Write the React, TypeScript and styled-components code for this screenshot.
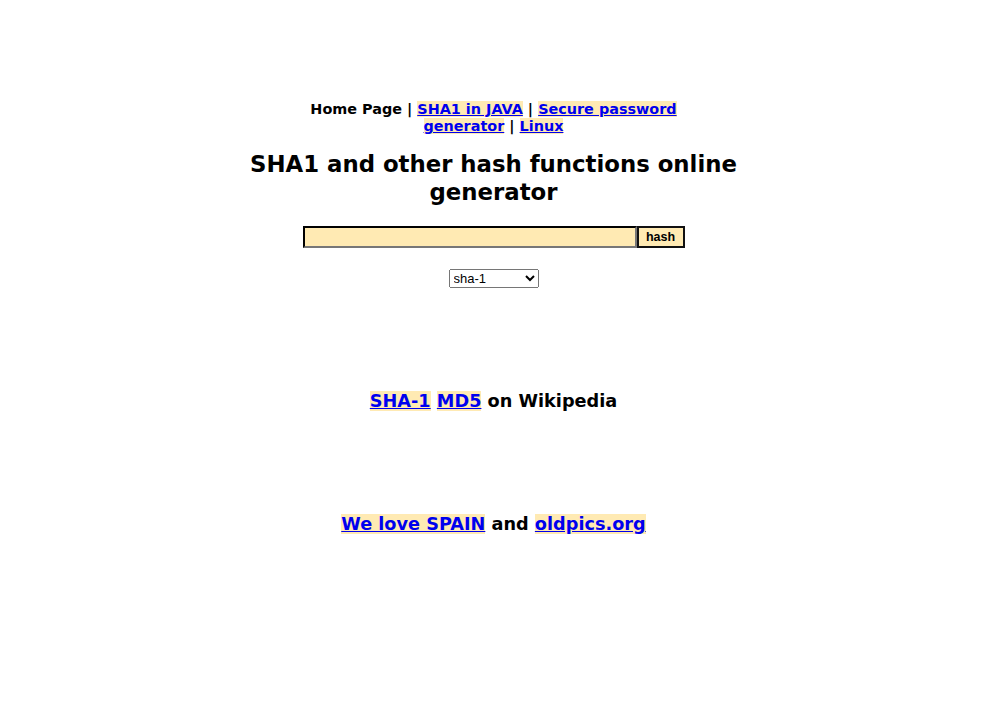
import React from "react";
import styled, { createGlobalStyle } from "styled-components";

const Global = createGlobalStyle`
  body { margin: 8px; background: #fff; font-family: "DejaVu Sans", Verdana, sans-serif; color: #000; }
`;

const Page = styled.div`
  display: flex;
  flex-direction: column;
  align-items: center;
  padding-top: 93px;
`;

const Nav = styled.div`
  width: 410px;
  text-align: center;
  font-size: 14.4px;
  font-weight: bold;
  line-height: 17px;
`;

const Link = styled.a`
  color: #0000ee;
  background: #ffeab3;
  text-decoration: underline;
`;

const Title = styled.h2`
  width: 500px;
  margin: 15px 0 0;
  text-align: center;
  font-size: 22.8px;
  line-height: 28px;
  font-weight: bold;
`;

const Form = styled.form`
  display: flex;
  margin-top: 20px;
`;

const Input = styled.input`
  box-sizing: border-box;
  width: 334px;
  height: 22px;
  border: 2px inset #333;
  border-color: #1a1a1a #777 #777 #1a1a1a;
  background: #ffeab3;
  padding: 0 2px;
  margin: 0;
`;

const Button = styled.button`
  box-sizing: border-box;
  width: 48px;
  height: 22px;
  border: 2px solid #111;
  background: #ffeab3;
  font-family: "Liberation Sans", Arial, sans-serif;
  font-weight: bold;
  font-size: 12.5px;
  padding: 0;
  margin: 0;
`;

const Select = styled.select`
  margin-top: 21px;
  width: 90px;
  height: 19px;
  font-family: "Liberation Sans", Arial, sans-serif;
  font-size: 13px;
`;

const BigLine = styled.div<{ $gap: number }>`
  text-align: center;
  font-size: 17.7px;
  font-weight: bold;
  line-height: 22px;
  margin-top: ${(p) => p.$gap}px;
`;

export default function App() {
  return (
    <>
      <Global />
      <Page>
        <Nav>
          Home Page | <Link href="#">SHA1 in JAVA</Link> | <Link href="#">Secure password generator</Link> |{" "}
          <Link href="#">Linux</Link>
        </Nav>
        <Title>SHA1 and other hash functions online generator</Title>
        <Form onSubmit={(e) => e.preventDefault()}>
          <Input type="text" />
          <Button type="submit">hash</Button>
        </Form>
        <Select defaultValue="sha-1">
          <option value="sha-1">sha-1</option>
          <option value="md5">md5</option>
        </Select>
        <BigLine $gap={102}>
          <Link href="#">SHA-1</Link> <Link href="#">MD5</Link> on Wikipedia
        </BigLine>
        <BigLine $gap={101}>
          <Link href="#">We love SPAIN</Link> and <Link href="#">oldpics.org</Link>
        </BigLine>
      </Page>
    </>
  );
}
